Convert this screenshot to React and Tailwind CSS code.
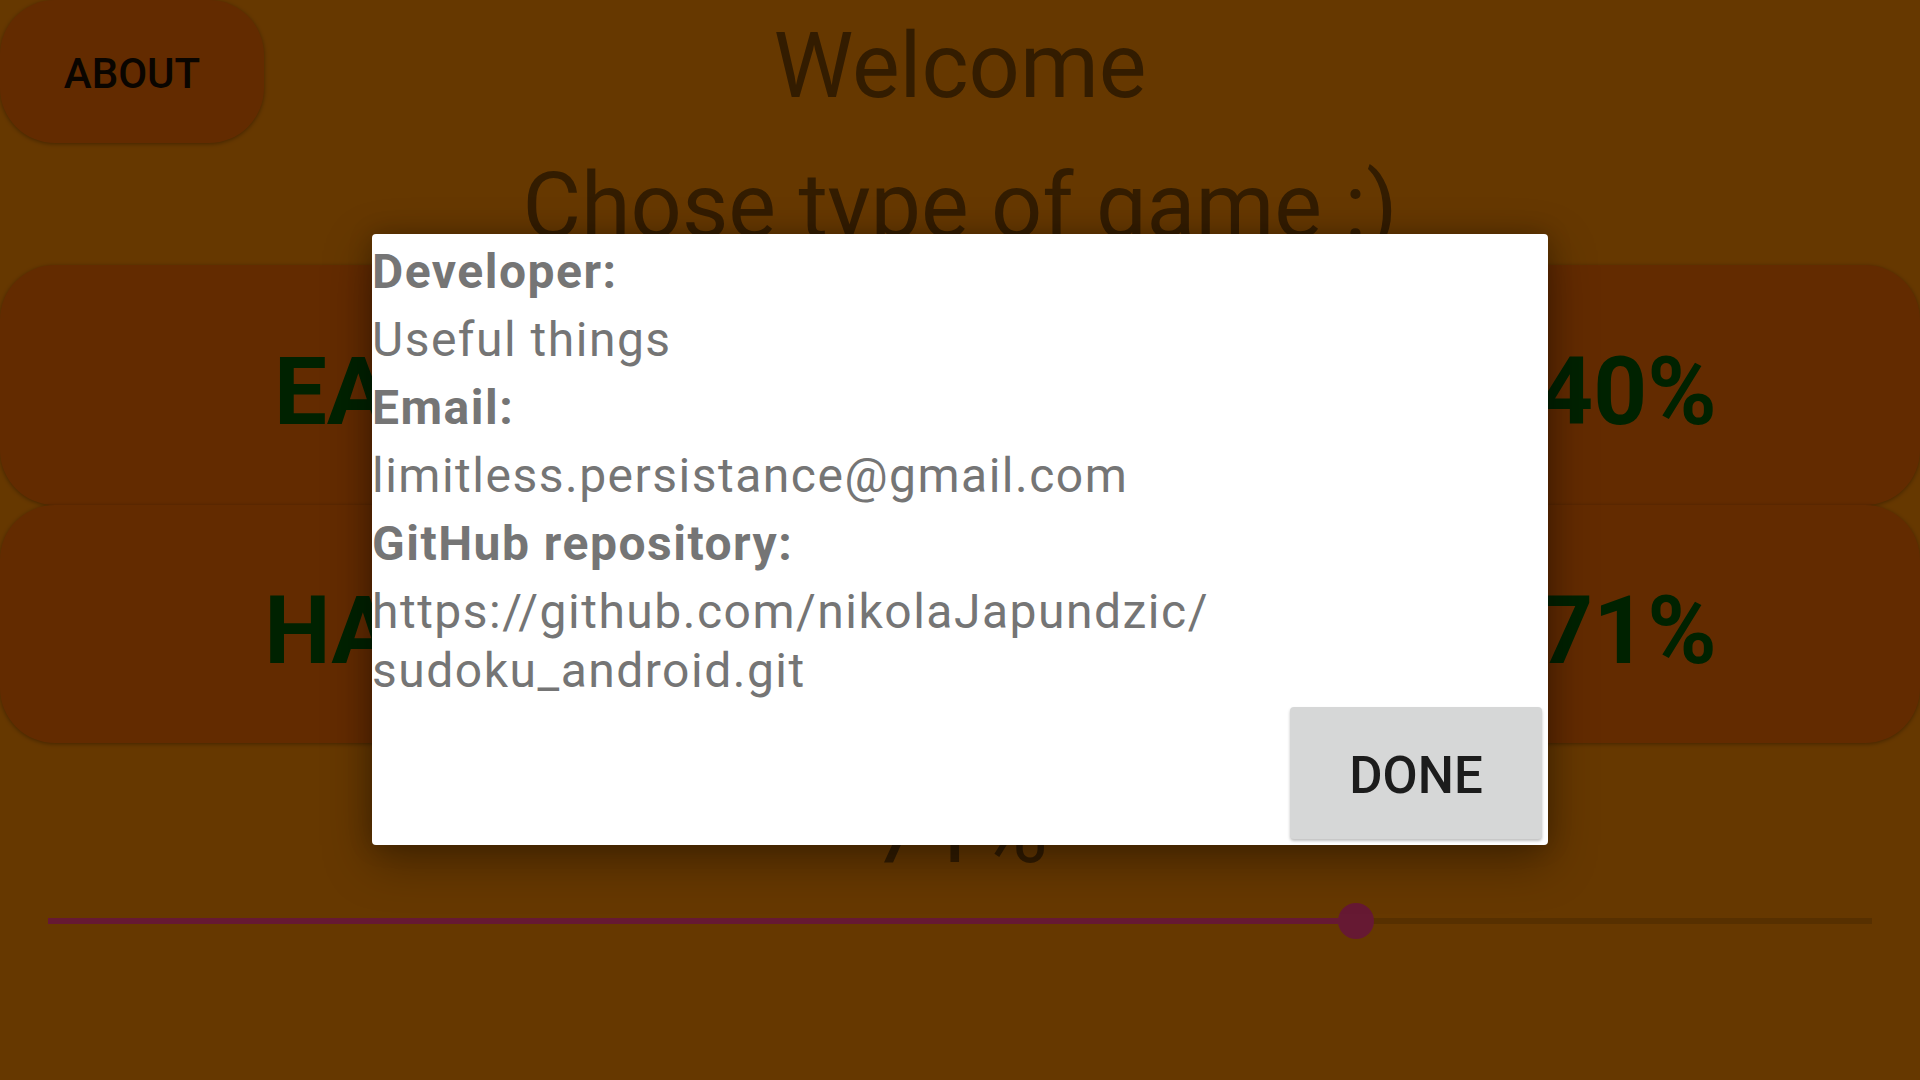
import React from "react";

function Card({ label, value, h }) {
  return (
    <div
      className={`flex items-center w-full ${h} pt-[13px] rounded-[55px] bg-[#f76c00] shadow-[0_1px_4px_rgba(0,0,0,0.35)] text-[94px] font-bold text-[#005500] leading-none`}
    >
      <div className="w-[780px] text-center">{label}</div>
      <div className="flex-1" />
      <div className="w-[584px] text-center">{value}</div>
    </div>
  );
}

export default function App() {
  return (
    <div className="relative w-[1920px] h-[1080px] overflow-hidden bg-[#ff8c00] font-['Roboto',sans-serif]">
      {/* page */}
      <div className="flex flex-col">
        <div className="grid grid-cols-[264px_1fr_264px] h-[143px]">
          <button className="w-[264px] h-[143px] pt-[5px] rounded-[55px] bg-[#f76c00] shadow-[0_1px_4px_rgba(0,0,0,0.35)] text-[42px] font-medium tracking-[0px] text-[#190d00] leading-none">
            ABOUT
          </button>
          <div className="self-start mt-[14px] text-center text-[90px] leading-[105px] text-[#804800]">
            Welcome
          </div>
          <div />
        </div>
        <div className="mt-[11px] text-center text-[90px] leading-[105px] text-[#804800]">
          Chose type of game :)
        </div>
        <div className="mt-[6px] flex flex-col">
          <Card label="EASY" value="40%" h="h-[240px]" />
          <Card label="HARD" value="71%" h="h-[238px]" />
        </div>
        <div className="mt-[34px] text-center text-[95px] leading-[105px] text-[#804800]">
          71%
        </div>
        <div className="mt-[21px] px-[48px]">
          <div className="relative h-[36px] flex items-center">
            <div className="h-[6px] w-[1308px] bg-[#ff4081]" />
            <div className="h-[6px] flex-1 bg-[#d97800]" />
            <div className="absolute left-[1290px] top-0 w-[36px] h-[36px] rounded-full bg-[#ff4081]" />
          </div>
        </div>
      </div>

      {/* dim overlay */}
      <div className="absolute inset-0 bg-black/60" />

      {/* dialog */}
      <div className="absolute left-[372px] top-[234px] w-[1176px] h-[611px] bg-white rounded-[4px] shadow-[0_16px_48px_rgba(0,0,0,0.35),0_0_24px_rgba(0,0,0,0.2)] flex flex-col justify-between">
        <div className="pt-[8px] flex flex-col gap-[9px] text-[48px] leading-[59px] tracking-[1.5px] text-[#757575]">
          <div className="font-bold">Developer:</div>
          <div>Useful things</div>
          <div className="font-bold">Email:</div>
          <div>limitless.persistance@gmail.com</div>
          <div className="font-bold">GitHub repository:</div>
          <div>
            https://github.com/nikolaJapundzic/
            <br />
            sudoku_android.git
          </div>
        </div>
        <div className="flex justify-end pr-[6px] pb-[6px]">
          <button className="w-[252px] h-[132px] pt-[5px] rounded-[4px] bg-[#d6d7d7] shadow-[0_2px_3px_rgba(0,0,0,0.25)] text-[51px] font-medium tracking-[0px] text-[#1c1c1c] leading-none">
            DONE
          </button>
        </div>
      </div>
    </div>
  );
}
